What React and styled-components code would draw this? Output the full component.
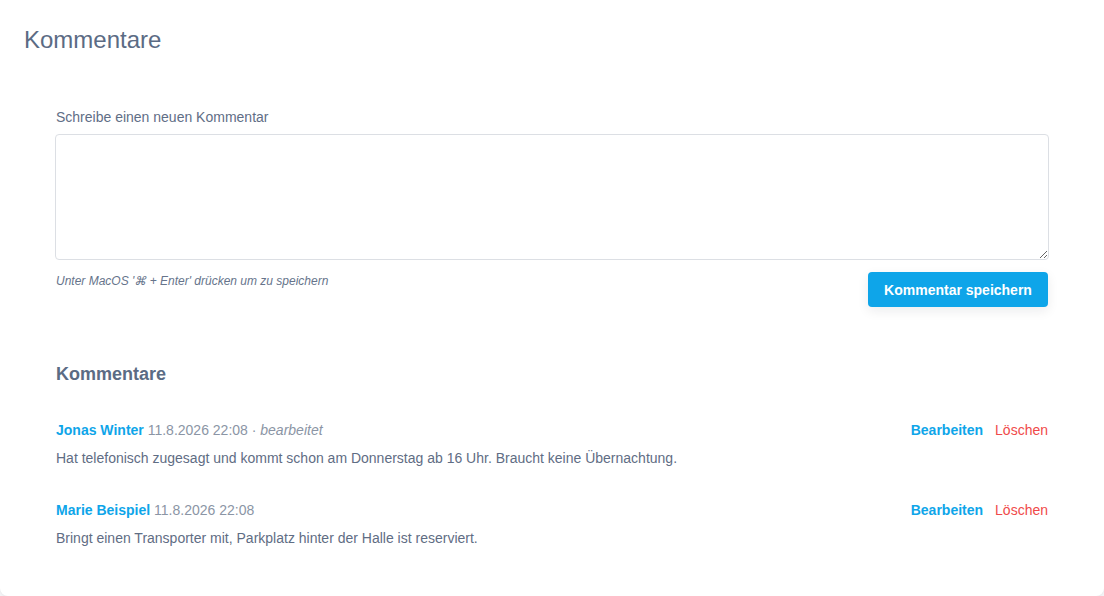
import React from 'react'
import styled, { createGlobalStyle } from "styled-components";

const GlobalStyle = createGlobalStyle`
  html, body {
    margin: 0;
    padding: 0;
    background: #f4f5f7;
    font-family: "Liberation Sans", Arial, sans-serif;
  }
`;

const Card = styled.div`
  background: #ffffff;
  height: 596px;
  box-sizing: border-box;
  border-radius: 0 0 8px 8px;
  box-shadow: 0 1px 3px rgba(15, 23, 42, 0.06);
  padding: 25px 24px 0;
`;

const Title = styled.h2`
  margin: 0;
  font-size: 24px;
  line-height: 30px;
  font-weight: 400;
  color: #5b6b84;
`;

const Body = styled.div`
  padding: 52px 32px 0 31px;
`;

const Label = styled.label`
  display: block;
  margin-left: 1px;
  font-size: 14px;
  line-height: 20px;
  color: #5f6e86;
  margin-bottom: 7px;
`;

const TextArea = styled.textarea`
  display: block;
  width: calc(100% + 1px);
  height: 126px;
  box-sizing: border-box;
  border: 1px solid #dcdfe4;
  border-radius: 4px;
  padding: 8px 10px;
  font-family: inherit;
  font-size: 14px;
  color: #4b5563;
  outline: none;
`;

const FormRow = styled.div`
  display: flex;
  justify-content: space-between;
  align-items: flex-start;
  margin-top: 12px;
`;

const Hint = styled.span`
  margin-left: 1px;
  font-size: 12px;
  line-height: 18px;
  font-style: italic;
  color: #66748b;
`;

const SaveButton = styled.button`
  height: 35px;
  width: 180px;
  border: none;
  border-radius: 4px;
  background: #0ea5e9;
  color: #ffffff;
  font-family: inherit;
  font-size: 14px;
  font-weight: 700;
  cursor: pointer;
  box-shadow: 0 4px 12px rgba(15, 23, 42, 0.08);
`;

const SectionTitle = styled.h3`
  margin: 55px 0 0 1px;
  font-size: 18px;
  line-height: 24px;
  font-weight: 700;
  color: #5b6b84;
`;

const CommentList = styled.div`
  display: flex;
  flex-direction: column;
  gap: 32px;
  margin-top: 34px;
  padding-left: 1px;
`;

const Comment = styled.div`
  display: flex;
  flex-direction: column;
  gap: 8px;
`;

const CommentHead = styled.div`
  display: flex;
  justify-content: space-between;
  align-items: center;
  font-size: 14px;
  line-height: 20px;
`;

const Author = styled.span`
  font-weight: 700;
  color: #0ea5e9;
`;

const Meta = styled.span`
  color: #8b95a5;
`;

const Edited = styled.span`
  font-style: italic;
`;

const Actions = styled.div`
  display: flex;
  gap: 12px;
`;

const ActionLink = styled.a`
  cursor: pointer;
  color: ${p => (p.$danger ? "#f04a4a" : "#0ea5e9")};
  font-weight: ${p => (p.$danger ? 400 : 700)};
`;

const CommentText = styled.p`
  margin: 0;
  font-size: 14px;
  line-height: 20px;
  color: #5f6d84;
`;

const comments = [
  {
    author: "Jonas Winter",
    date: "11.8.2026 22:08",
    edited: true,
    text: "Hat telefonisch zugesagt und kommt schon am Donnerstag ab 16 Uhr. Braucht keine Übernachtung.",
  },
  {
    author: "Marie Beispiel",
    date: "11.8.2026 22:08",
    edited: false,
    text: "Bringt einen Transporter mit, Parkplatz hinter der Halle ist reserviert.",
  },
];

export default function App() {
  return (
    <>
      <GlobalStyle />
      <Card>
        <Title>Kommentare</Title>
        <Body>
          <Label>Schreibe einen neuen Kommentar</Label>
          <TextArea />
          <FormRow>
            <Hint>Unter MacOS '⌘ + Enter' drücken um zu speichern</Hint>
            <SaveButton>Kommentar speichern</SaveButton>
          </FormRow>

          <SectionTitle>Kommentare</SectionTitle>
          <CommentList>
            {comments.map((c, i) => (
              <Comment key={i}>
                <CommentHead>
                  <div>
                    <Author>{c.author}</Author>{" "}
                    <Meta>
                      {c.date}
                      {c.edited && <> · <Edited>bearbeitet</Edited></>}
                    </Meta>
                  </div>
                  <Actions>
                    <ActionLink>Bearbeiten</ActionLink>
                    <ActionLink $danger>Löschen</ActionLink>
                  </Actions>
                </CommentHead>
                <CommentText>{c.text}</CommentText>
              </Comment>
            ))}
          </CommentList>
        </Body>
      </Card>
    </>
  )
}
